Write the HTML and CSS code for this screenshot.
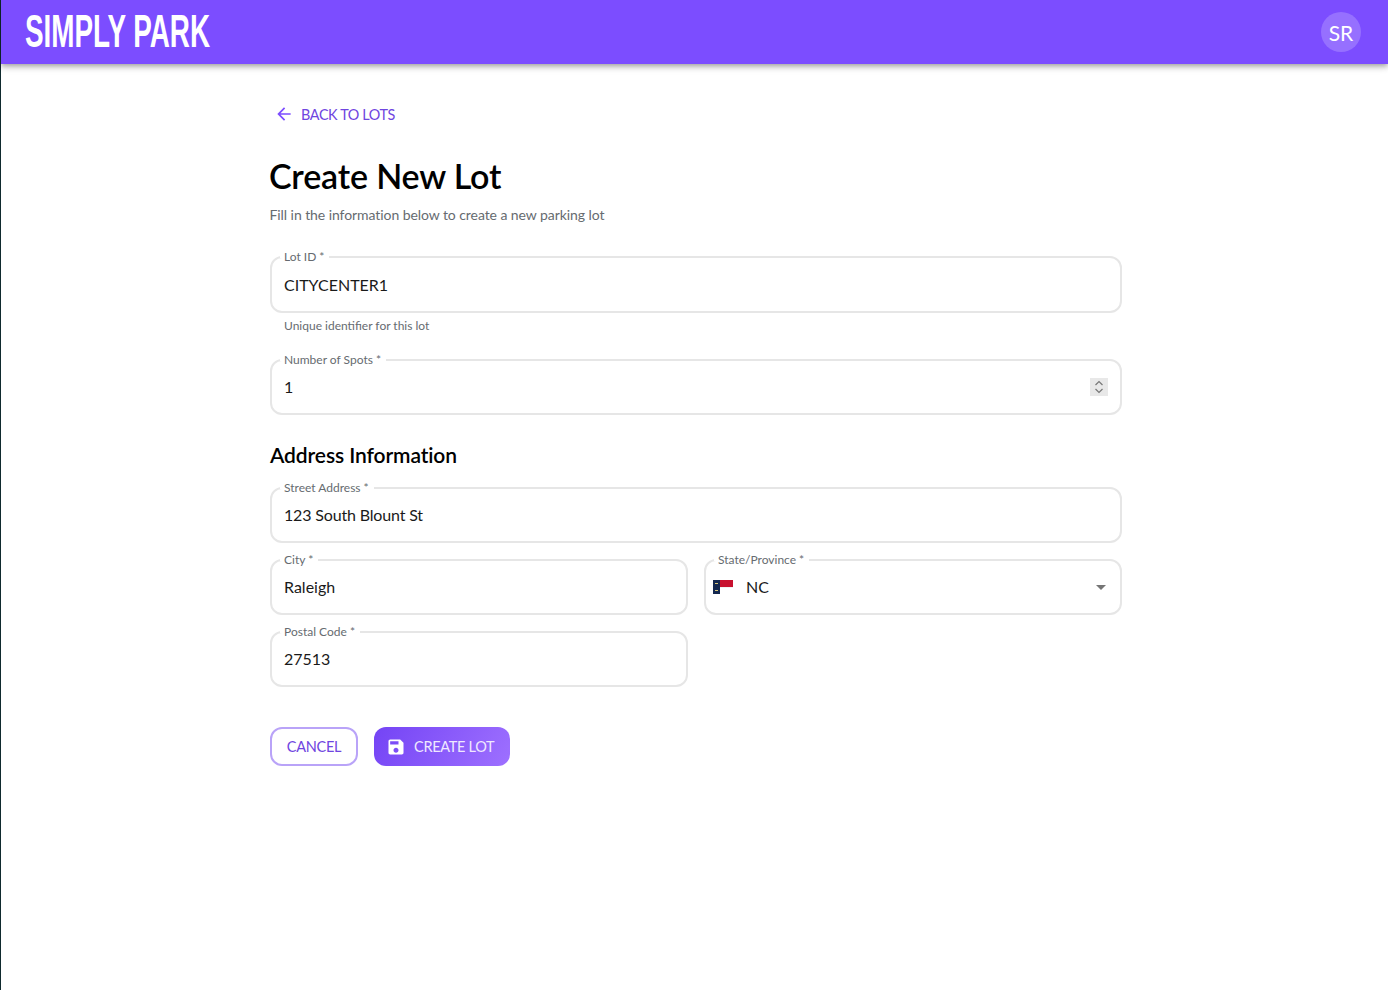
FILE: index.html
```html
<!DOCTYPE html>
<html lang="en">
  <head>
    <meta charset="UTF-8" />
    <meta name="viewport" content="width=device-width, initial-scale=1.0" />
    <title>Simply Park - Create New Lot</title>
    <link rel="stylesheet" href="styles.css">
  </head>
  <body>
    <div class="app">
      <header class="app-bar">
        <div class="logo">SIMPLY PARK</div>
        <div class="avatar">SR</div>
      </header>

      <main class="page">
        <a class="back-link" href="#">
          <svg class="back-icon" viewBox="0 0 24 24"><path d="M20 11H7.83l5.59-5.59L12 4l-8 8 8 8 1.41-1.41L7.83 13H20v-2z"/></svg>
          BACK TO LOTS
        </a>

        <h1 class="title">Create New Lot</h1>
        <p class="subtitle">Fill in the information below to create a new parking lot</p>

        <form class="lot-form">
          <fieldset class="field field-tall">
            <legend>Lot ID *</legend>
            <input type="text" value="CITYCENTER1" />
          </fieldset>
          <p class="helper">Unique identifier for this lot</p>

          <fieldset class="field">
            <legend>Number of Spots *</legend>
            <input class="number-input" type="text" value="1" />
            <span class="spinner">
              <svg viewBox="0 0 18 18"><path d="M5.5 7 9 3.5 12.5 7M5.5 11 9 14.5 12.5 11"/></svg>
            </span>
          </fieldset>

          <h2 class="section-title">Address Information</h2>

          <fieldset class="field">
            <legend>Street Address *</legend>
            <input class="street-input" type="text" value="123 South Blount St" />
          </fieldset>

          <div class="field-row">
            <fieldset class="field">
              <legend>City *</legend>
              <input type="text" value="Raleigh" />
            </fieldset>
            <fieldset class="field">
              <legend>State/Province *</legend>
              <div class="select-value">
                <svg class="flag" viewBox="0 0 20 14">
                  <rect width="20" height="14" fill="#fff"/>
                  <rect x="7" width="13" height="7" fill="#c8102e"/>
                  <rect x="7" y="7" width="13" height="1" fill="#f2f2f2"/>
                  <rect width="7" height="14" fill="#14284f"/>
                  <rect x="2" y="3" width="3" height="1" fill="#d9c77a"/>
                  <rect x="2" y="10" width="3" height="1" fill="#d9c77a"/>
                </svg>
                <span>NC</span>
                <span class="caret"></span>
              </div>
            </fieldset>
          </div>

          <div class="field-row">
            <fieldset class="field">
              <legend>Postal Code *</legend>
              <input type="text" value="27513" />
            </fieldset>
          </div>

          <div class="actions">
            <button class="btn btn-cancel" type="button">CANCEL</button>
            <button class="btn btn-create" type="button">
              <svg class="save-icon" viewBox="0 0 24 24"><path d="M17 3H5c-1.11 0-2 .9-2 2v14c0 1.1.89 2 2 2h14c1.1 0 2-.9 2-2V7l-4-4zm-5 16c-1.66 0-3-1.34-3-3s1.34-3 3-3 3 1.34 3 3-1.34 3-3 3zm3-10H5V5h10v4z"/></svg>
              CREATE LOT
            </button>
          </div>
        </form>
      </main>
    </div>
  </body>
</html>
```

FILE: styles.css
```css
/* Simply Park - create lot page */
* {
  box-sizing: border-box;
}

body {
  margin: 0;
  background-color: #0f2a2e;
  font-family: Lato, "Open Sans", sans-serif;
  color: #000;
}

.app {
  margin-left: 1px;
  min-height: 990px;
  background-color: #fff;
}

.app-bar {
  height: 64px;
  display: flex;
  align-items: center;
  justify-content: space-between;
  padding: 0 27px 0 24px;
  background-color: #7c4dff;
  box-shadow: 0 2px 4px -1px rgba(0, 0, 0, 0.2), 0 4px 5px rgba(0, 0, 0, 0.14), 0 1px 10px rgba(0, 0, 0, 0.12);
}

.logo {
  padding-bottom: 3px;
  font-family: "Liberation Sans", sans-serif;
  font-size: 46px;
  font-weight: 700;
  color: #fff;
  transform: scaleX(0.605);
  transform-origin: left center;
  white-space: nowrap;
}

.avatar {
  width: 40px;
  height: 40px;
  border-radius: 50%;
  display: flex;
  align-items: center;
  justify-content: center;
  background-color: #9670ff;
  color: #fff;
  font-size: 21px;
}

.page {
  padding: 34px 266px 0 269px;
}

.back-link {
  display: inline-flex;
  align-items: center;
  gap: 7px;
  height: 32px;
  padding-left: 5px;
  color: #6f45e0;
  font-size: 14.4px;
  letter-spacing: -0.38px;
  text-decoration: none;
}

.back-icon {
  width: 20px;
  height: 20px;
  margin-left: -1px;
  fill: #7c4dff;
}

.title {
  margin: 25px 0 0 -1px;
  font-size: 34px;
  line-height: 42px;
  font-weight: 600;
  letter-spacing: -0.15px;
}

.subtitle {
  margin: 8px 0 0 -0.5px;
  font-size: 14px;
  line-height: 20px;
  letter-spacing: -0.07px;
  color: #666b70;
}

.lot-form {
  margin-top: 31px;
}

.field {
  position: relative;
  min-width: 0;
  height: 56px;
  margin: 0 0 16px;
  padding: 0 12px;
  border: 2px solid #e6e6e6;
  border-radius: 12px;
}

.field-tall {
  height: 57px;
}

.field legend {
  height: 2px;
  padding: 0 5px 0 4px;
  margin-left: -4px;
  font-size: 12px;
  line-height: 2px;
  color: #666b70;
}

.field input {
  width: 100%;
  height: 50px;
  padding: 0;
  border: none;
  outline: none;
  background: transparent;
  font-family: inherit;
  font-size: 16px;
  color: #1a1a1a;
}

.field-tall input {
  height: 52px;
}

.street-input {
  letter-spacing: -0.16px;
}

.helper {
  margin: -13px 0 23px 14px;
  font-size: 12px;
  line-height: 20px;
  color: #666b70;
}

.spinner {
  position: absolute;
  top: 17px;
  right: 12px;
  width: 18px;
  height: 18px;
  background-color: #e8e8e8;
}

.spinner svg {
  display: block;
  fill: none;
  stroke: #777;
  stroke-width: 1.2;
}

.section-title {
  margin: 28px 0 20px;
  font-size: 21px;
  line-height: 24px;
  font-weight: 600;
  letter-spacing: -0.1px;
}

.field-row {
  display: grid;
  grid-template-columns: 1fr 1fr;
  gap: 16px;
}

.select-value {
  display: flex;
  align-items: center;
  height: 50px;
  font-size: 16px;
  color: #1a1a1a;
  gap: 13px;
  margin-left: -5px;
}

.flag {
  width: 20px;
  height: 14px;
  margin-top: 2px;
}

.caret {
  margin-left: auto;
  margin-right: 2px;
  margin-top: 2px;
  width: 0;
  height: 0;
  border-left: 5px solid transparent;
  border-right: 5px solid transparent;
  border-top: 5px solid #757575;
}

.actions {
  display: flex;
  gap: 16px;
  margin-top: 24px;
}

.btn {
  height: 39px;
  display: inline-flex;
  align-items: center;
  border-radius: 12px;
  font-family: inherit;
  font-size: 14.5px;
  letter-spacing: -0.3px;
  cursor: pointer;
}

.btn-cancel {
  width: 88px;
  justify-content: center;
  border: 2px solid #b9a3f8;
  background-color: #fff;
  color: #6f45e0;
}

.btn-create {
  width: 136px;
  justify-content: flex-start;
  gap: 8px;
  padding: 0 0 0 12px;
  border: none;
  background: linear-gradient(120deg, #7444f5, #9e70ff);
  color: #efe8ff;
}

.save-icon {
  width: 20px;
  height: 20px;
  fill: #fff;
}
```
